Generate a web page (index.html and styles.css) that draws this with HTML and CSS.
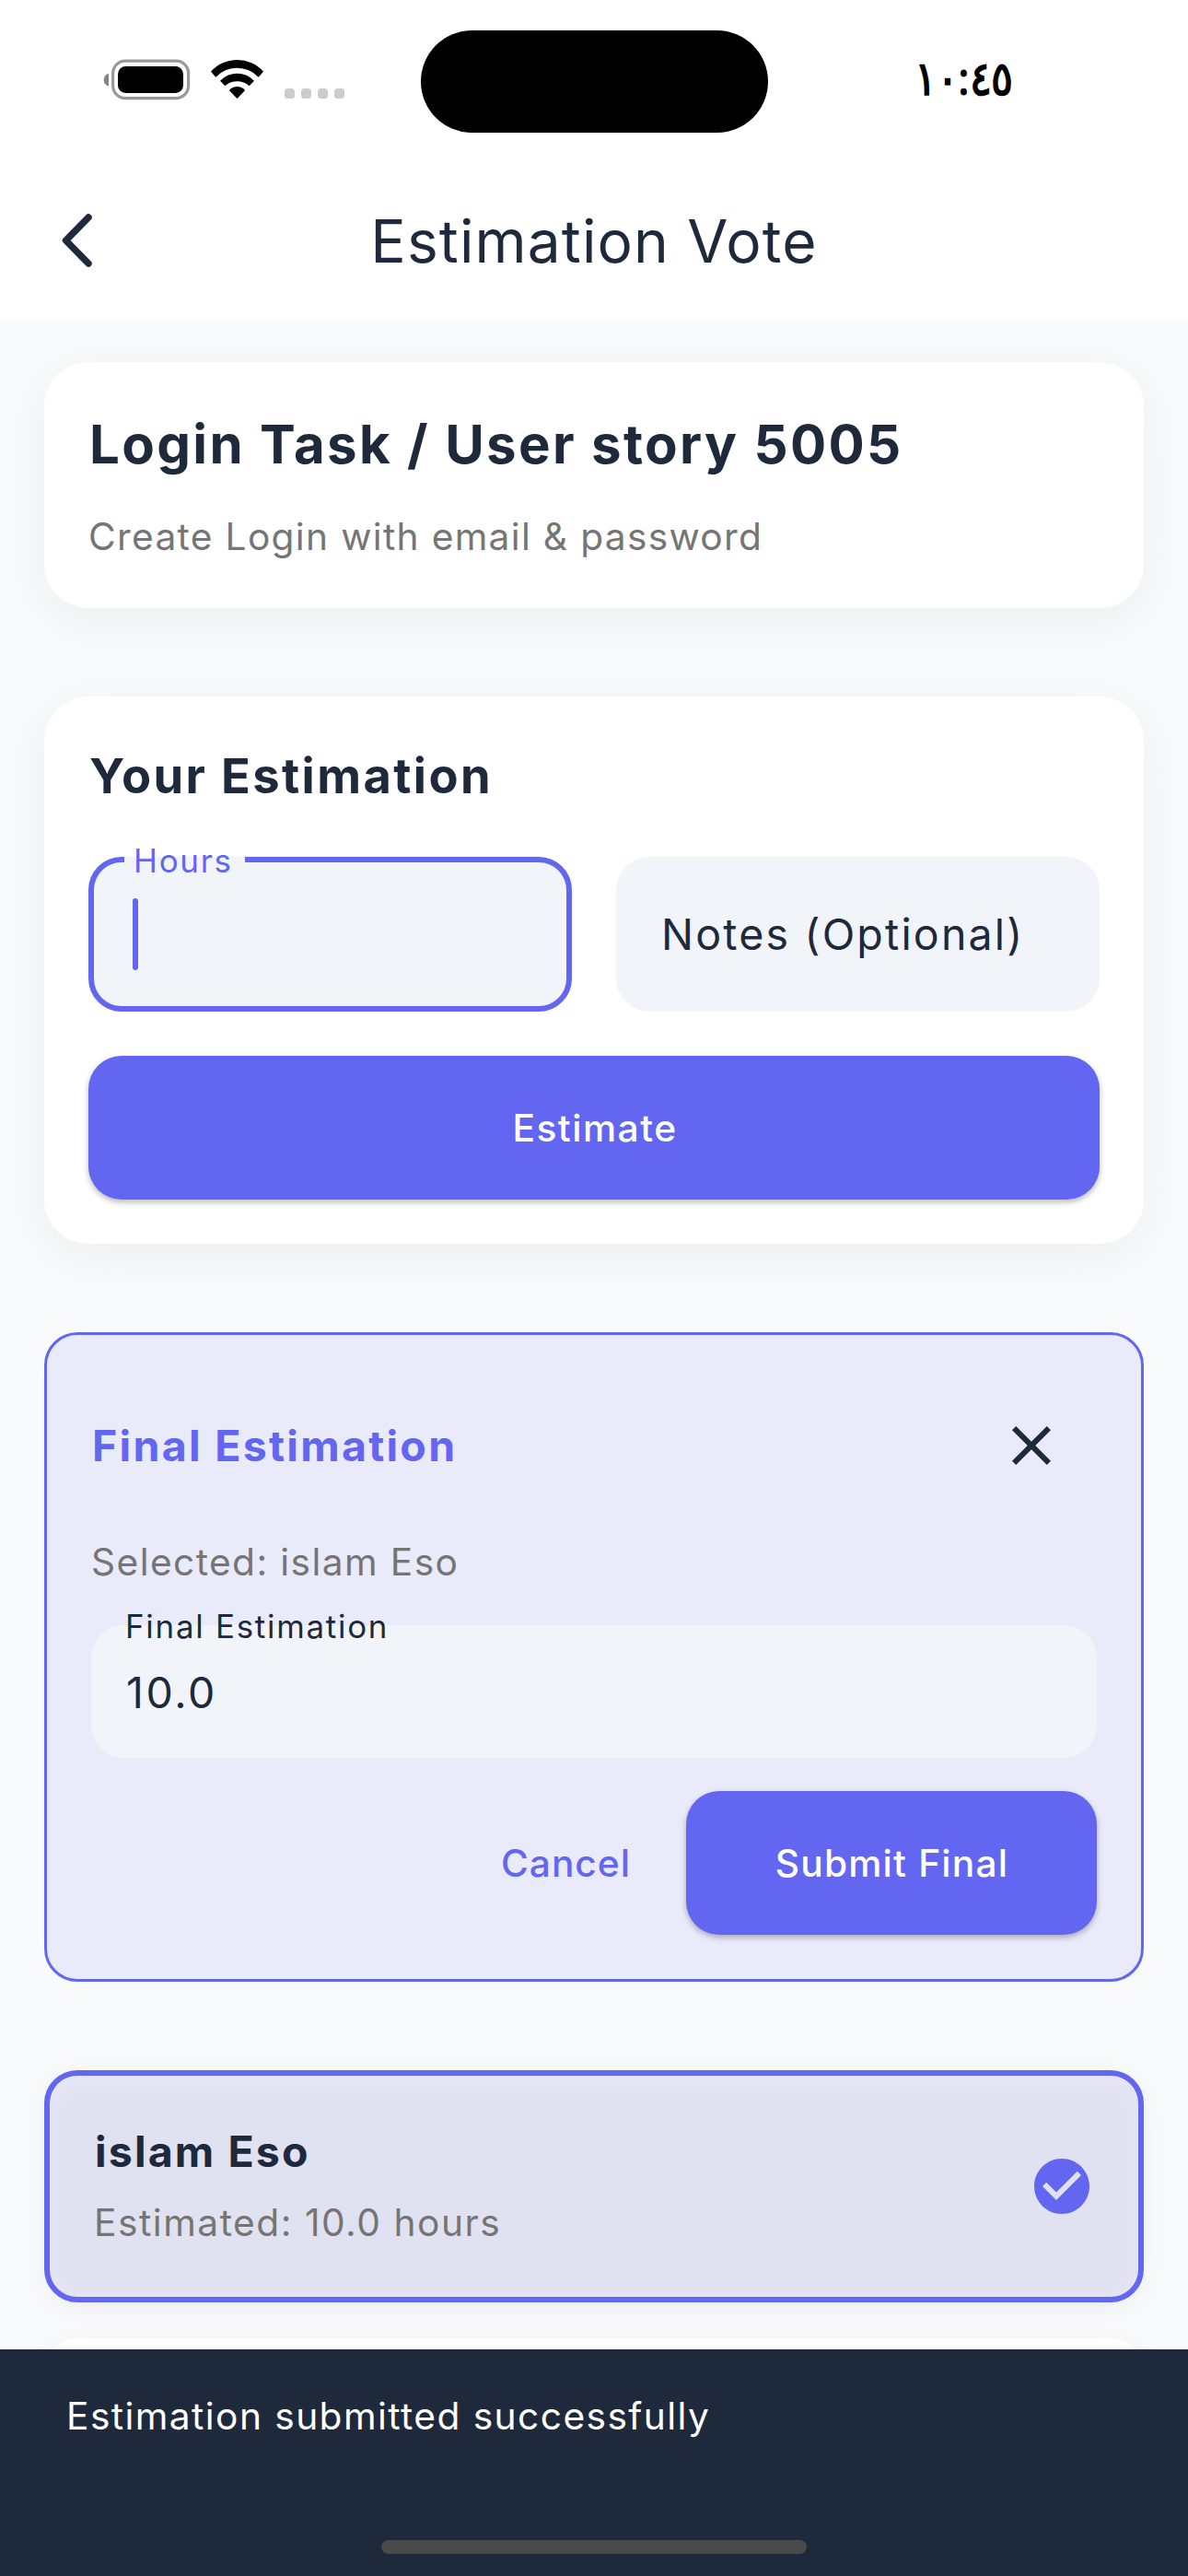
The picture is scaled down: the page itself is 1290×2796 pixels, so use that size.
FILE: index.html
```html
<!DOCTYPE html>
<html lang="en">
<head>
<meta charset="utf-8">
<title>Estimation Vote</title>
<link rel="stylesheet" href="styles.css">
</head>
<body>
<div class="screen">
  <header class="top">
    <div class="status">
      <svg class="status-icons" width="264" height="46" viewBox="112 64 264 46">
        <path d="M118 80v13.4c-3-.6-5.3-3.500-5.300-6.700s2.300-6.100 5.300-6.700z" fill="#858585"/>
        <rect x="122.600" y="66.200" width="82" height="40.400" rx="13.500" fill="none" stroke="#999" stroke-width="3.200"/>
        <rect x="128" y="72" width="71" height="29" rx="8.500" fill="#000"/>
        <g transform="translate(229 65)" fill="#000">
          <path d="M0 12.700A38.300 38.300 0 0 1 57 12.700L51.700 18.700A31.900 31.900 0 0 0 5.300 18.700Z"/>
          <path d="M10 22.700A25.400 25.400 0 0 1 47 22.700L41.700 28.300A19.900 19.900 0 0 0 15.300 28.300Z"/>
          <path d="M20 33.300A10.500 10.500 0 0 1 37 33.300L28.500 42Z"/>
        </g>
        <g fill="#ccc">
          <rect x="309" y="96" width="11" height="11" rx="3.500"/>
          <rect x="327" y="96" width="11" height="11" rx="3.500"/>
          <rect x="345" y="96" width="11" height="11" rx="3.500"/>
          <rect x="363" y="96" width="11" height="11" rx="3.500"/>
        </g>
      </svg>
      <div class="island"></div>
      <span class="time">١٠:٤٥</span>
    </div>
    <div class="nav">
      <svg class="back" width="44" height="66" viewBox="0 0 44 66"><path d="M32 8 7.500 33 32 58" fill="none" stroke="#1e293b" stroke-width="7.500" stroke-linecap="round" stroke-linejoin="round"/></svg>
      <h1>Estimation Vote</h1>
    </div>
  </header>

  <main>
    <section class="card task">
      <h2>Login Task / User story 5005</h2>
      <p class="body">Create Login with email &amp; password</p>
    </section>

    <section class="card form">
      <h3>Your Estimation</h3>
      <div class="fields">
        <div class="field active"><span class="label">Hours</span><span class="caret"></span></div>
        <div class="field notes">Notes (Optional)</div>
      </div>
      <div class="button">Estimate</div>
    </section>

    <section class="final">
      <div class="final-head">
        <h4>Final Estimation</h4>
        <svg class="close" width="72" height="72" viewBox="0 0 24 24"><path d="M19 6.410 17.590 5 12 10.590 6.410 5 5 6.410 10.590 12 5 17.590 6.410 19 12 13.410 17.590 19 19 17.590 13.410 12z" fill="#1e293b"/></svg>
      </div>
      <p class="body">Selected: islam Eso</p>
      <div class="field value"><span class="label">Final Estimation</span>10.0</div>
      <div class="actions">
        <span class="cancel">Cancel</span>
        <div class="button submit">Submit Final</div>
      </div>
    </section>

    <section class="vote selected">
      <div class="who">
        <h4>islam Eso</h4>
        <p class="body">Estimated: 10.0 hours</p>
      </div>
      <svg width="72" height="72" viewBox="0 0 24 24"><path d="M12 2C6.480 2 2 6.480 2 12s4.480 10 10 10 10-4.480 10-10S17.520 2 12 2zm-2 15-5-5 1.410-1.410L10 14.170l7.590-7.590L19 8z" fill="#6366f1"/></svg>
    </section>
    <section class="vote"></section>
  </main>

  <footer class="snackbar">
    <p>Estimation submitted successfully</p>
    <div class="home"></div>
  </footer>
</div>
</body>
</html>
```
FILE: styles.css
```css
* { box-sizing: border-box; margin: 0; }

body {
  font-family: Inter, "Noto Sans", sans-serif;
  color: #1e293b;
}

.screen {
  position: relative;
  width: 1290px;
  height: 2796px;
  overflow: hidden;
  background: #f8fafc;
}

/* Status bar and navigation */
.top { height: 345px; background: #fff; }

.status {
  display: flex;
  align-items: flex-start;
  height: 177px;
  padding-left: 112px;
}
.status-icons { margin-top: 64px; }
.island {
  width: 377px;
  height: 111px;
  margin: 33px 0 0 80.500px;
  border-radius: 56px;
  background: #000;
}
.time {
  margin: 48px 0 0 159px;
  font: 600 51px/70px "Noto Sans", sans-serif;
  color: #000;
  /* Arabic digits ignore letter-spacing, so the line is condensed instead */
  transform: scaleX(0.875);
  transform-origin: left center;
}

.nav {
  display: grid;
  grid-template-columns: 112px 1fr 112px;
  align-items: center;
  height: 168px;
}
.back { margin-left: 64px; }
h1 {
  font-size: 64px;
  font-weight: 400;
  letter-spacing: 1.150px;
  text-align: center;
}

/* Cards */
main { padding: 48px 48px 0; }

.card {
  padding: 48px;
  margin-bottom: 96px;
  border-radius: 48px;
  background: #fff;
  box-shadow: 0 12px 60px rgba(0, 0, 0, 0.05);
}

h2 {
  padding-left: 1px;
  margin-bottom: 28px;
  font-size: 58.200px;
  font-weight: 700;
  line-height: 83px;
  letter-spacing: 2.320px;
}
h3 {
  padding-left: 1px;
  margin-bottom: 50px;
  font-size: 52.400px;
  font-weight: 700;
  line-height: 76px;
  letter-spacing: 2.400px;
}
h4 {
  font-size: 46.500px;
  font-weight: 700;
  line-height: 68px;
  letter-spacing: 2.370px;
}
.body {
  font-size: 40.700px;
  line-height: 60px;
  letter-spacing: 1.400px;
  color: #757575;
}
.task .body { padding-top: 1px; margin-bottom: -1px; letter-spacing: 1.310px; }

/* Inputs */
.fields {
  display: grid;
  grid-template-columns: 1fr 1fr;
  gap: 48px;
  margin-bottom: 48px;
}
.field {
  position: relative;
  display: flex;
  align-items: center;
  height: 168px;
  border-radius: 36px;
  background: #f1f5f9;
  font-size: 46.500px;
}
.active {
  border: 6px solid #6366f1;
  padding-left: 42px;
}
.label {
  position: absolute;
  font-size: 34.900px;
  line-height: 52px;
  letter-spacing: 1.740px;
}
.active .label {
  top: -28px;
  left: 33px;
  width: 131px;
  padding-left: 10px;
  color: #6366f1;
  background: linear-gradient(transparent 22px, #f1f5f9 22px 29px, transparent 29px);
}
.caret {
  width: 6px;
  height: 78px;
  border-radius: 3px;
  background: #6366f1;
}
.notes { padding-left: 49px; letter-spacing: 2.180px; }

/* Buttons */
.button {
  display: flex;
  align-items: center;
  justify-content: center;
  height: 156px;
  border-radius: 36px;
  background: #6366f1;
  box-shadow: 0 3px 6px rgba(0, 0, 0, 0.28);
  color: #fff;
  font-size: 40.700px;
  font-weight: 500;
  letter-spacing: 1.500px;
}
.form .button { padding-left: 2px; }

/* Final estimation panel */
.final {
  padding: 48px;
  margin-bottom: 96px;
  border: 3px solid #6366f1;
  border-radius: 36px;
  background: #e9ebfb;
}
.final-head {
  display: flex;
  align-items: center;
  justify-content: space-between;
  height: 144px;
  margin-bottom: 25px;
  padding-right: 35px;
  color: #6366f1;
}
.final-head h4 { padding-left: 1px; letter-spacing: 2.280px; }
.value {
  height: 144px;
  margin: 38px 0 36px;
  padding: 1px 0 0 38px;
  letter-spacing: 2.600px;
}
.value .label { top: -25px; left: 37px; }
.actions {
  display: flex;
  align-items: center;
  justify-content: flex-end;
  gap: 60px;
}
.cancel {
  font-size: 40.700px;
  font-weight: 500;
  letter-spacing: 1px;
  color: #6366f1;
}
.submit { width: 446px; padding-left: 1px; letter-spacing: 1.200px; }

/* Votes */
.vote {
  display: flex;
  justify-content: space-between;
  align-items: center;
  height: 252px;
  margin-bottom: 39px;
  padding: 48px 47px 48px 48px;
  border-radius: 36px;
  background: #fff;
  box-shadow: 0 6px 30px rgba(0, 0, 0, 0.05);
}
.selected {
  border: 6px solid #6366f1;
  background: #e1e2f1;
  box-shadow: 0 6px 30px rgba(0, 0, 0, 0.05), inset 0 6px 24px rgba(234, 235, 255, 0.7);
}
.who { height: 144px; }
.who h4 { margin-bottom: 14px; padding-left: 1px; letter-spacing: 2.130px; }
.who .body { letter-spacing: 1.510px; }

/* Snackbar */
.snackbar {
  position: absolute;
  inset: auto 0 0;
  display: flex;
  flex-direction: column;
  justify-content: space-between;
  height: 246px;
  padding: 43px 72px 24px;
  background: #1e293b;
  color: #fff;
  font-size: 40.700px;
  line-height: 60px;
  letter-spacing: 1.420px;
}
.home {
  align-self: center;
  width: 462px;
  height: 15px;
  border-radius: 8px;
  background: #4a4a4a;
}
```
